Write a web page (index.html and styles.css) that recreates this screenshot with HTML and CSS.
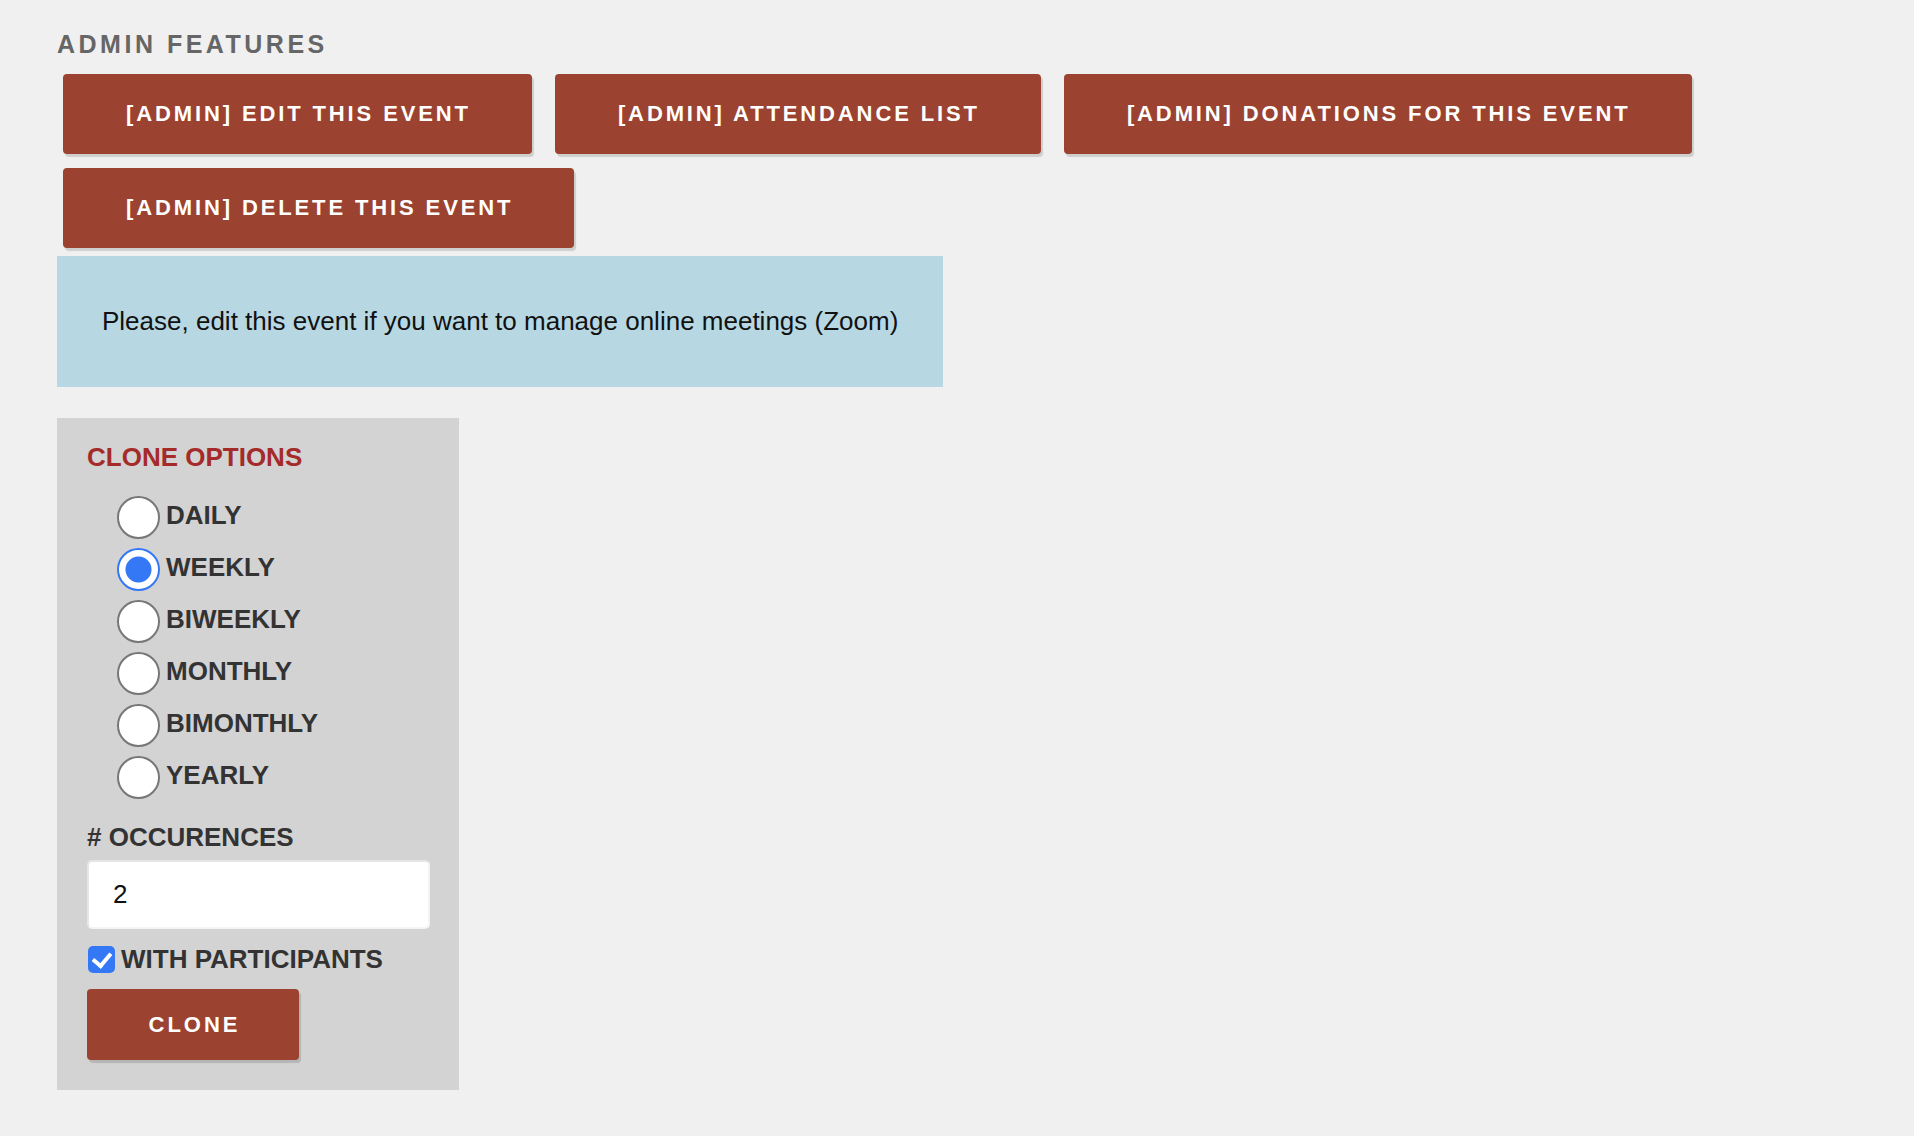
FILE: index.html
```html
<!DOCTYPE html>
<html lang="en">
<head>
<meta charset="utf-8">
<title>Event – Admin features</title>
<link rel="stylesheet" href="styles.css">
</head>
<body>
<main class="page">
  <h2 class="section-title">ADMIN FEATURES</h2>
  <div class="admin-actions">
    <a class="btn" href="#">[ADMIN] EDIT THIS EVENT</a>
    <a class="btn" href="#">[ADMIN] ATTENDANCE LIST</a>
    <a class="btn" href="#">[ADMIN] DONATIONS FOR THIS EVENT</a>
    <a class="btn" href="#">[ADMIN] DELETE THIS EVENT</a>
  </div>

  <div class="notice">Please, edit this event if you want to manage online meetings (Zoom)</div>

  <form class="clone-panel">
    <h3 class="clone-title">CLONE OPTIONS</h3>
    <div class="freq-list">
      <label class="freq"><input type="radio" name="freq" value="daily"><span>DAILY</span></label>
      <label class="freq"><input type="radio" name="freq" value="weekly" checked><span>WEEKLY</span></label>
      <label class="freq"><input type="radio" name="freq" value="biweekly"><span>BIWEEKLY</span></label>
      <label class="freq"><input type="radio" name="freq" value="monthly"><span>MONTHLY</span></label>
      <label class="freq"><input type="radio" name="freq" value="bimonthly"><span>BIMONTHLY</span></label>
      <label class="freq"><input type="radio" name="freq" value="yearly"><span>YEARLY</span></label>
    </div>
    <label class="field-label" for="occ"># OCCURENCES</label>
    <input class="text-input" id="occ" type="text" value="2">
    <label class="check"><input type="checkbox" checked><span>WITH PARTICIPANTS</span></label>
    <button class="btn btn-clone" type="button">CLONE</button>
  </form>
</main>
</body>
</html>
```

FILE: styles.css
```css
html, body {
  margin: 0;
  padding: 0;
  background: #f0f0f0;
}

body {
  font-family: "Liberation Sans", Arial, Helvetica, sans-serif;
  color: #333;
}

.page {
  padding: 29px 0 40px 57px;
}

.section-title {
  margin: 0;
  font-size: 25px;
  line-height: 30px;
  font-weight: bold;
  letter-spacing: 3.5px;
  color: #666;
}

.admin-actions {
  display: flex;
  flex-wrap: wrap;
  column-gap: 23px;
  row-gap: 14px;
  margin: 15px 0 0 6px;
  max-width: 1680px;
}

.btn {
  display: inline-flex;
  align-items: center;
  justify-content: center;
  box-sizing: border-box;
  height: 80px;
  padding: 0 61px 0 63px;
  background: #9b4230;
  color: #fff;
  font-family: "Liberation Sans", Arial, sans-serif;
  font-size: 22px;
  font-weight: bold;
  letter-spacing: 2.88px;
  text-decoration: none;
  border: none;
  border-radius: 4px;
  box-shadow: 2px 3px 1px rgba(0, 0, 0, 0.14);
  cursor: pointer;
}

.notice {
  display: flex;
  align-items: center;
  box-sizing: border-box;
  width: fit-content;
  height: 131px;
  margin-top: 8px;
  padding: 0 45px 0 45px;
  background: #b7d8e3;
  color: #111;
  font-size: 26px;
}

.clone-panel {
  display: flex;
  flex-direction: column;
  align-items: flex-start;
  box-sizing: border-box;
  width: 402px;
  margin-top: 31px;
  padding: 24px 29px 30px 30px;
  background: #d3d3d3;
}

.clone-title {
  margin: 0;
  font-size: 26px;
  line-height: 30px;
  font-weight: bold;
  color: #a52a2a;
}

.freq-list {
  display: flex;
  flex-direction: column;
  margin: 19px 0 0 30px;
}

.freq {
  display: flex;
  align-items: center;
  gap: 6px;
  height: 52px;
  font-size: 26px;
  font-weight: bold;
  color: #333;
}

.freq span {
  margin-top: -3px;
}

.freq input {
  appearance: none;
  -webkit-appearance: none;
  box-sizing: border-box;
  width: 43px;
  height: 43px;
  margin: 0;
  border: 2px solid #777;
  border-radius: 50%;
  background: #fff;
}

.freq input:checked {
  border-color: #3478f6;
  background: radial-gradient(circle, #3478f6 0 12.5px, #fff 13.5px);
}

.field-label {
  margin-top: 19px;
  font-size: 26px;
  line-height: 30px;
  font-weight: bold;
  color: #333;
}

.text-input {
  box-sizing: border-box;
  width: 100%;
  height: 69px;
  margin-top: 8px;
  padding: 0 24px;
  border: 2px solid #e6e6e6;
  border-right-color: #f4f4f4;
  border-bottom-color: #f4f4f4;
  border-radius: 5px;
  background: #fff;
  font-family: "Liberation Sans", Arial, sans-serif;
  font-size: 26px;
  color: #111;
  outline: none;
}

.check {
  display: flex;
  align-items: center;
  gap: 6px;
  margin-top: 15px;
  font-size: 26px;
  font-weight: bold;
  color: #333;
}

.check input {
  appearance: none;
  -webkit-appearance: none;
  position: relative;
  width: 27px;
  height: 27px;
  margin: 0 0 0 1px;
  border-radius: 5px;
  background: #3478f6;
}

.check input:checked::after {
  content: "";
  position: absolute;
  left: 8px;
  top: 3px;
  width: 8px;
  height: 14px;
  border: solid #fff;
  border-width: 0 4px 4px 0;
  transform: rotate(40deg);
}

.btn-clone {
  width: 212px;
  height: 71px;
  margin-top: 14px;
  padding: 0 0 0 3px;
  letter-spacing: 3px;
}
```
